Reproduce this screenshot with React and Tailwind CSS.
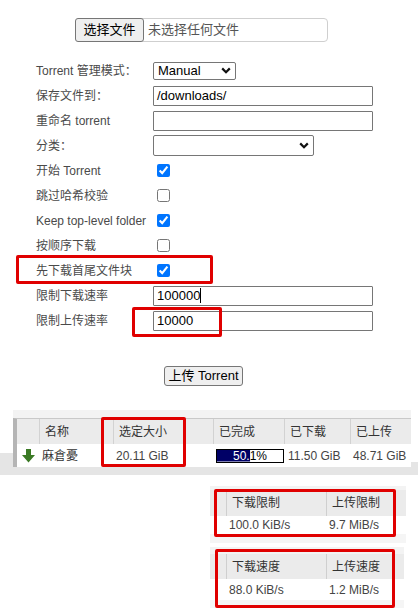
import React from 'react';

const font = "font-['Liberation_Sans','Noto_Sans_CJK_SC',sans-serif]";

function Chevron() {
  return (
    <svg width="10" height="7" viewBox="0 0 10 7" className="shrink-0">
      <path d="M1.2 1.4 L5 5.2 L8.8 1.4" fill="none" stroke="#111" strokeWidth="2.2" />
    </svg>
  );
}

function FilePicker() {
  return (
    <div className="pt-[18px] pl-[75px]">
      <div className="flex items-center w-[253px] h-[24px] border border-[#cfcfcf] rounded-[4px]">
        <div className="-ml-px h-[24px] w-[69px] flex items-center justify-center border border-[#767676] rounded-[3px] bg-[#efefef] text-[13px] text-black">
          选择文件
        </div>
        <span className="ml-[4px] text-[13px] text-[#555]">未选择任何文件</span>
      </div>
    </div>
  );
}

function Row({ label, children, className = '' }) {
  return (
    <div className={`relative flex items-center h-[25px] pl-[36px] ${className}`}>
      <div className="w-[117px] shrink-0 text-[12px] text-[#4a4a4a]">{label}</div>
      {children}
    </div>
  );
}

function TextBox({ value, caret }) {
  return (
    <div className="flex items-center w-[220px] h-[20px] border border-[#767676] rounded-[1px] px-[3px] text-[13px] text-black">
      {value}
      {caret && <span className="inline-block w-px h-[15px] bg-black" />}
    </div>
  );
}

function Check({ checked }) {
  return (
    <input
      type="checkbox"
      defaultChecked={checked}
      className="ml-[4px] w-[13px] h-[13px] accent-[#0075ff]"
    />
  );
}

function UploadForm() {
  return (
    <div className="mt-[16px]">
      <Row label="Torrent 管理模式：">
        <div className="flex items-center justify-between w-[83px] h-[18px] border border-[#767676] rounded-[2px] pl-[4px] pr-[4px] text-[13px] text-black">
          Manual
          <Chevron />
        </div>
      </Row>
      <Row label="保存文件到：">
        <TextBox value="/downloads/" />
      </Row>
      <Row label="重命名 torrent">
        <TextBox value="" />
      </Row>
      <Row label="分类：">
        <div className="flex items-center justify-end w-[161px] h-[21px] border border-[#767676] rounded-[2px] pr-[4px]">
          <Chevron />
        </div>
      </Row>
      <Row label="开始 Torrent">
        <Check checked />
      </Row>
      <Row label="跳过哈希校验">
        <Check />
      </Row>
      <Row label="Keep top-level folder">
        <Check checked />
      </Row>
      <Row label="按顺序下载">
        <Check />
      </Row>
      <Row label="先下载首尾文件块">
        <Check checked />
        <div className="absolute left-[16px] top-[-3px] w-[197px] h-[29px] border-[3px] border-[#e00000] rounded-[2px] pointer-events-none" />
      </Row>
      <Row label="限制下载速率">
        <TextBox value="100000" caret />
      </Row>
      <Row label="限制上传速率">
        <TextBox value="10000" />
        <div className="absolute left-[132px] top-[-1px] w-[90px] h-[30px] border-[3px] border-[#e00000] rounded-[2px] pointer-events-none" />
      </Row>
      <div className="mt-[33px] pl-[164px]">
        <div className="flex items-center justify-center w-[79px] h-[20px] border border-[#767676] rounded-[3px] bg-[#efefef] text-[13px] text-black">
          上传 Torrent
        </div>
      </div>
    </div>
  );
}

function DownArrow() {
  return (
    <svg width="13" height="14" viewBox="0 0 13 14">
      <path d="M4 0 H9 V6 H13 L6.5 13.5 L0 6 H4 Z" fill="#3b7a25" />
    </svg>
  );
}

function Progress({ value }) {
  // the white-on-navy part is the same label, clipped to the filled width
  const clip = { clipPath: `inset(0 ${100 - value}% 0 0)` };
  return (
    <div className="relative w-[68px] h-[14px] border border-black bg-white text-[12px] leading-[12px]">
      <div className="flex items-center justify-center w-full h-full text-black">{value}%</div>
      <div className="absolute inset-0 flex items-center justify-center bg-[#000066] text-white" style={clip}>
        {value}%
      </div>
    </div>
  );
}

function TorrentTable() {
  const cols = [
    { title: '', w: 'w-[22px]' },
    { title: '名称', w: 'w-[74px]' },
    { title: '选定大小', w: 'w-[100px]' },
    { title: '已完成', w: 'w-[71px]' },
    { title: '已下载', w: 'w-[66px]' },
    { title: '已上传', w: 'flex-1' },
  ];
  return (
    <div className="mt-[24px] flex h-[65px]">
      <div className="w-[13px] flex flex-col">
        <div className="h-[43px] bg-white" />
        <div className="flex-1 bg-[#e5e5e5]" />
      </div>
      <div className="w-[398px] flex flex-col">
        <div className="relative h-[57px] flex flex-col">
          <div className="h-[8px] bg-[#f3f3f3]" />
          <div className="flex h-[26px] bg-[#ebebeb] border-t border-[#c9c9c9] border-l-4 border-l-[#b5b5b5] text-[12px] text-[#333]">
            {cols.map((c, i) => (
              <div key={i} className={`${c.w} flex items-center pl-[5px] ${i > 0 ? 'border-l border-[#d2d2d2]' : ''}`}>
                {c.title}
              </div>
            ))}
          </div>
          <div className="flex items-center h-[23px] bg-white border-l-4 border-[#b5b5b5] text-[12px] text-[#444]">
            <div className="w-[22px] flex justify-center pl-[1px]">
              <DownArrow />
            </div>
            <div className="w-[74px] pl-[3px] text-[#333]">麻倉憂</div>
            <div className="w-[100px] pl-[3px]">20.11 GiB</div>
            <div className="w-[71px] pl-[3px]">
              <Progress value={50.1} />
            </div>
            <div className="w-[66px] pl-[4px]">11.50 GiB</div>
            <div className="flex-1 pl-[3px]">48.71 GiB</div>
          </div>
          <div className="absolute left-[88px] top-[7px] w-[85px] h-[50px] border-[3px] border-[#e00000] rounded-[2px] pointer-events-none" />
        </div>
        <div className="flex-1 bg-[#e5e5e5]" />
      </div>
      <div className="flex-1 flex flex-col">
        <div className="h-[52px] bg-white" />
        <div className="flex-1 bg-[#e5e5e5]" />
      </div>
    </div>
  );
}

function SpeedTable({ heads, values, dims, box, className = '' }) {
  return (
    <div className={`relative ml-[210px] ${dims.w} flex flex-col ${className}`}>
      <div className={`${dims.top} bg-[#f3f3f3]`} />
      <div className={`flex ${dims.head} bg-[#ebebeb] text-[12px] text-[#333]`}>
        <div className="w-[16px]" />
        <div className="w-[100px] flex items-center pl-[5px] border-l border-[#cfcfcf]">{heads[0]}</div>
        <div className="flex-1 flex items-center pl-[5px] border-l border-[#cfcfcf]">{heads[1]}</div>
      </div>
      <div className={`flex items-center ${dims.row} bg-white text-[12px] text-[#444]`}>
        <div className="w-[16px]" />
        <div className="w-[101px] pl-[3px]">{values[0]}</div>
        <div className="flex-1 pl-[2px]">{values[1]}</div>
      </div>
      <div className={`${dims.bottom} bg-[#f5f5f5]`} />
      <div className={`absolute ${box} border-[3px] border-[#e00000] rounded-[2px] pointer-events-none`} />
    </div>
  );
}

export default function App() {
  return (
    <div className={`w-[418px] h-[613px] overflow-hidden bg-white ${font}`}>
      <FilePicker />
      <UploadForm />
      <TorrentTable />
      <SpeedTable
        className="mt-[11px]"
        heads={['下载限制', '上传限制']}
        values={['100.0 KiB/s', '9.7 MiB/s']}
        dims={{ w: 'w-[196px]', top: 'h-[4px]', head: 'h-[26px]', row: 'h-[18px]', bottom: 'h-[9px]' }}
        box="left-[4px] top-[3px] w-[182px] h-[48px]"
      />
      <SpeedTable
        className="mt-[4px]"
        heads={['下载速度', '上传速度']}
        values={['88.0 KiB/s', '1.2 MiB/s']}
        dims={{ w: 'w-[194px]', top: 'h-[7px]', head: 'h-[25px]', row: 'h-[21px]', bottom: 'h-[8px]' }}
        box="left-[5px] top-[2px] w-[180px] h-[59px]"
      />
    </div>
  );
}
